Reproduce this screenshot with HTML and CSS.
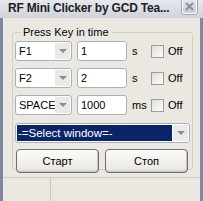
FILE: index.html
```html
<!DOCTYPE html>
<html>
<head>
<meta charset="utf-8">
<link rel="stylesheet" href="styles.css">
</head>
<body>
<div class="window">
  <div class="titlebar">
    <span class="title">RF Mini Clicker by GCD Tea...</span>
    <span class="close"><svg width="9" height="9" viewBox="0 0 9 9"><path d="M1 1 L8 8 M8 1 L1 8" stroke="#8a8e99" stroke-width="2"/></svg></span>
  </div>
  <div class="body">
    <fieldset class="group">
      <legend>Press Key in time</legend>
      <div class="row">
        <div class="combo"><span class="val">F1</span><span class="drop"><i class="tri"></i></span></div>
        <div class="edit">1</div>
        <span class="unit">s</span>
        <span class="check"></span>
        <span class="off">Off</span>
      </div>
      <div class="row">
        <div class="combo"><span class="val">F2</span><span class="drop"><i class="tri"></i></span></div>
        <div class="edit">2</div>
        <span class="unit">s</span>
        <span class="check"></span>
        <span class="off">Off</span>
      </div>
      <div class="row">
        <div class="combo"><span class="val">SPACE</span><span class="drop"><i class="tri"></i></span></div>
        <div class="edit">1000</div>
        <span class="unit">ms</span>
        <span class="check"></span>
        <span class="off">Off</span>
      </div>
      <div class="select"><span class="sel">-=Select window=-</span><span class="drop"><i class="tri"></i></span></div>
      <div class="buttons">
        <div class="btn">Старт</div>
        <div class="btn">Стоп</div>
      </div>
    </fieldset>
    <div class="status"><div class="pane first"></div><div class="pane"></div></div>
  </div>
</div>
</body>
</html>
```
FILE: styles.css
```css
html, body { margin: 0; padding: 0; }
body { width: 203px; height: 201px; overflow: hidden; background: #eae8e1; font-family: "Liberation Sans", Arial, sans-serif; font-size: 11px; color: #000; }
.window { width: 203px; height: 201px; box-sizing: border-box; border-left: 3px solid #7d879f; border-right: 3px solid #7d879f; display: flex; flex-direction: column; background: #eae8e1; }
.titlebar { height: 18px; flex: none; display: flex; align-items: flex-start; justify-content: space-between; background: linear-gradient(#e6e8ee, #d0d3dc); margin-left: -3px; margin-right: -3px; padding-left: 8px; padding-right: 2px; }
.title { font-weight: bold; font-size: 12px; line-height: 16px; color: #222; white-space: nowrap; letter-spacing: -0.2px; }
.close { width: 15px; height: 14px; margin-right: 4px; box-sizing: border-box; border: 1px solid #fff; border-top: none; border-radius: 0 0 3px 3px; background: linear-gradient(#e4e6ee, #c5c9d6); display: flex; align-items: center; justify-content: center; box-shadow: 0 0 0 1px #9ea4b4; }
.body { flex: 1; display: flex; flex-direction: column; }
.group { margin: 8px 8px 0 9px; padding: 3px 2px 5px 2px; border: 1px solid #d0d0bf; border-radius: 3px; height: 144px; box-sizing: border-box; display: flex; flex-direction: column; }
legend { padding: 0 3px; margin-left: 5px; font-size: 11px; }
.row { display: flex; align-items: center; height: 20px; margin-bottom: 7px; }
.combo { width: 57px; height: 20px; box-sizing: border-box; border: 1px solid #a9b0bb; border-radius: 3px; background: #fff; display: flex; align-items: center; }
.val { flex: 1; padding-left: 3px; }
.drop { width: 15px; height: 16px; margin-right: 1px; background: #e9e9e7; display: flex; align-items: center; justify-content: center; }
.tri { width: 0; height: 0; border-left: 4px solid transparent; border-right: 4px solid transparent; border-top: 4px solid #8d8d8d; }
.edit { width: 50px; height: 20px; margin-left: 5px; box-sizing: border-box; border: 1px solid #a9b0bb; border-radius: 3px; background: #fff; padding-left: 3px; line-height: 18px; }
.unit { width: 24px; padding-left: 5px; box-sizing: border-box; }
.check { width: 13px; height: 13px; box-sizing: border-box; border: 1px solid #9c9c9c; background: linear-gradient(135deg, #dcdcd7, #fff); }
.off { margin-left: 4px; }
.select { height: 20px; width: 175px; box-sizing: border-box; border: 1px solid #a9b0bb; border-radius: 3px; background: #fff; display: flex; align-items: center; margin-top: 1px; }
.sel { flex: 1; height: 16px; margin: 0 1px; background: #0a246a; color: #fff; line-height: 16px; padding-left: 1px; font-size: 11.5px; }
.buttons { display: flex; gap: 6px; margin-top: 6px; padding-left: 1px; }
.btn { width: 83px; height: 24px; box-sizing: border-box; border: 1px solid #6f6f6f; border-radius: 4px; background: linear-gradient(#fbfbfb, #eae9e6 85%, #d6d4ce); box-shadow: inset -1px -1px 0 #c8c6c0; display: flex; align-items: center; justify-content: center; font-size: 11px; }
.status { margin-top: 7px; flex: 1; display: flex; border-top: 1px solid #cfcdc4; }
.pane { flex: 1; }
.pane.first { flex: none; width: 47px; border-right: 1px solid #c9c7be; }
```
